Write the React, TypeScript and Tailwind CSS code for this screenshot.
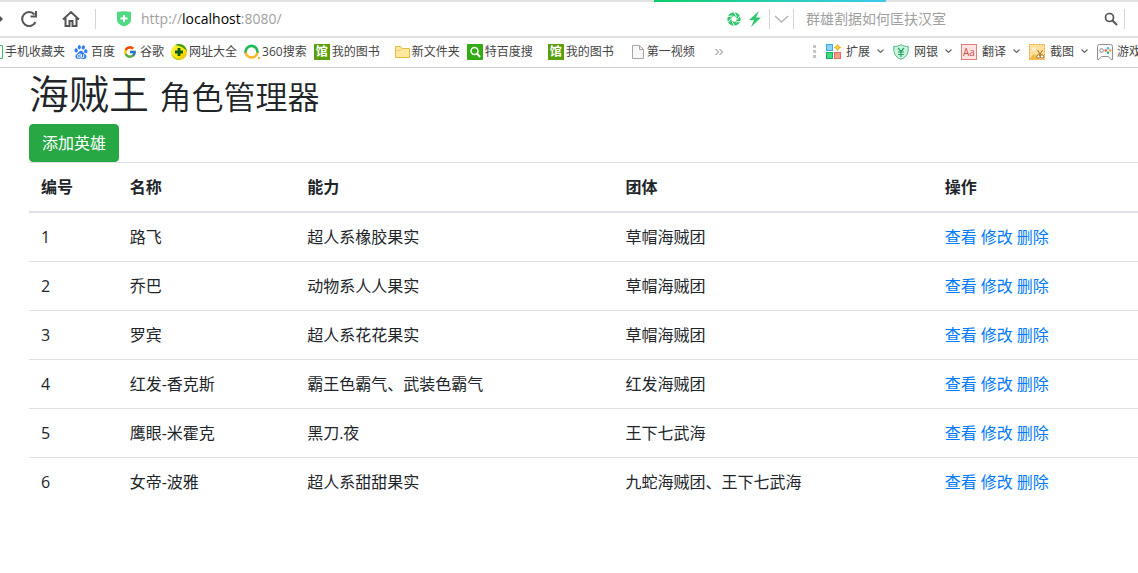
import React from 'react';
import { SiBaidu } from 'react-icons/si';
import { FcGoogle } from 'react-icons/fc';

interface Hero {
  id: number;
  name: string;
  power: string;
  team: string;
}

const heroes: Hero[] = [
  { id: 1, name: '路飞', power: '超人系橡胶果实', team: '草帽海贼团' },
  { id: 2, name: '乔巴', power: '动物系人人果实', team: '草帽海贼团' },
  { id: 3, name: '罗宾', power: '超人系花花果实', team: '草帽海贼团' },
  { id: 4, name: '红发-香克斯', power: '霸王色霸气、武装色霸气', team: '红发海贼团' },
  { id: 5, name: '鹰眼-米霍克', power: '黑刀.夜', team: '王下七武海' },
  { id: 6, name: '女帝-波雅', power: '超人系甜甜果实', team: '九蛇海贼团、王下七武海' },
];

const PhoneIcon = () => (
  <svg width="3" height="16" viewBox="0 0 3 16">
    <path d="M0 1.5h2.5v13H0" fill="none" stroke="#3fbf73" />
  </svg>
);

const SiteNavIcon = () => (
  <svg width="16" height="16" viewBox="0 0 16 16">
    <defs>
      <linearGradient id="nav" x1="0" y1="0" x2="1" y2="1">
        <stop offset="0" stopColor="#fff45a" />
        <stop offset="0.6" stopColor="#ffe600" />
        <stop offset="1" stopColor="#e8a800" />
      </linearGradient>
    </defs>
    <circle cx="8" cy="8" r="8" fill="url(#nav)" />
    <path d="M4 1.100A8 8 0 0 1 16 8C14 4 9 2 4 1.100z" fill="#3fa01c" />
    <path d="M0 9A8 8 0 0 0 10 15.700C5 15 2 13 0 9z" fill="#8cc411" />
    <path d="M8 4v8M4 8h8" stroke="#0b5d1e" strokeWidth="2.800" />
  </svg>
);

const SearchRingIcon = () => (
  <svg width="17" height="16" viewBox="0 0 17 16" fill="none" strokeWidth="2.6">
    <path d="M1.6 9A6 6 0 1 1 13.4 9" stroke="#1fb955" />
    <path d="M1.6 8.600A6 6 0 0 0 13.4 8.600" stroke="#fbb924" />
    <circle cx="15" cy="14" r="1.200" fill="#fbb924" />
  </svg>
);

const LibraryIcon = () => (
  <span className="flex size-4 items-center justify-center bg-[#5c9f0c] text-xs leading-4 font-bold text-white">
    馆
  </span>
);

const FolderIcon = () => (
  <svg width="15" height="14" viewBox="0 0 15 14">
    <path d="M.5 12.500V1.500h5l1.500 2h7.500v9z" fill="#ffe9a0" stroke="#e9b93c" />
    <path d="M.5 5.500h5l1.500-2" fill="none" stroke="#f3cf6c" />
  </svg>
);

const GreenSearchIcon = () => (
  <svg width="16" height="16" viewBox="0 0 16 16">
    <rect width="16" height="16" rx="1" fill="#32ab14" />
    <circle cx="7.500" cy="7" r="3.500" fill="none" stroke="#fff" strokeWidth="1.500" />
    <path d="M10 9.500l3 3.500" stroke="#fff" strokeWidth="2" />
  </svg>
);

const FileIcon = () => (
  <svg width="12" height="14" viewBox="0 0 12 14">
    <path d="M.5.500h7l4 4v9H.500z" fill="#f7f7f7" stroke="#a6a6a6" />
    <path d="M7.500.500v4h4" fill="none" stroke="#a6a6a6" />
  </svg>
);

const ExtensionIcon = () => (
  <svg width="16" height="16" viewBox="0 0 16 16">
    <rect x="1.500" y=".5" width="6" height="6" fill="#8fd3fb" stroke="#3ba7ee" />
    <rect x="1.500" y="8.500" width="6" height="6" fill="#3ddc84" stroke="#12ad55" />
    <rect x="9.500" y="8.500" width="6" height="6" fill="#ff9c8f" stroke="#f26b5b" />
    <path d="M12.500.500l1 2 2 1-2 1-1 2-1-2-2-1 2-1z" fill="#ffd53d" stroke="#e8a200" />
  </svg>
);

const BankIcon = () => (
  <svg width="16" height="16" viewBox="0 0 16 16">
    <path d="M8 .700C6 2 3 2.500.800 2.500c-.5 6 1 10.500 7.200 12.800 6.200-2.300 7.700-6.800 7.200-12.800C13 2.500 10 2 8 .700z" fill="#c9f5dc" stroke="#4cb582" />
    <path d="M5 4l3 3.500L11 4M8 7.500V13M5 8h6M5 10.500h6" fill="none" stroke="#2f9f68" strokeWidth="1.200" />
  </svg>
);

const TranslateIcon = () => (
  <span className="flex size-4 items-center justify-center border border-[#d9817c] bg-[#fde3e1] text-[10px] leading-none text-[#cf4f49]">
    Aa
  </span>
);

const CaptureIcon = () => (
  <svg width="16" height="16" viewBox="0 0 16 16">
    <rect x=".5" y=".5" width="15" height="15" fill="#ffdf9c" stroke="#eda02f" strokeDasharray="2 1" />
    <circle cx="5" cy="5" r="2" fill="#fff3d2" />
    <path d="M0 15l5-5 4 3v3H0z" fill="#f5b64d" />
    <path d="M8.500 6l3 5M13.500 6l-3 5" stroke="#a76a10" />
    <circle cx="9.500" cy="12.500" r="1.700" fill="#fff" stroke="#a76a10" />
    <circle cx="13" cy="12.500" r="1.700" fill="#fff" stroke="#a76a10" />
  </svg>
);

const GameIcon = () => (
  <svg width="16" height="16" viewBox="0 0 16 16">
    <path d="M2.500.500h11q2 0 2 2v13h-1.500l-2.500-3h-7l-2.500 3H.500v-13q0-2 2-2z" fill="#fafafa" stroke="#8f8f8f" />
    <circle cx="4.500" cy="6.500" r="1.800" fill="none" stroke="#888" />
    <circle cx="11" cy="4.300" r="1.200" fill="#35b7f1" />
    <circle cx="11" cy="8.700" r="1.200" fill="#25b864" />
    <circle cx="8.800" cy="6.500" r="1.200" fill="#f2564a" />
    <circle cx="13.200" cy="6.500" r="1.200" fill="#f5a623" />
  </svg>
);

const ChevronIcon = () => (
  <svg width="7" height="5" viewBox="0 0 7 5">
    <path d="M.5.500l3 3 3-3" fill="none" stroke="#666" strokeWidth="1.200" />
  </svg>
);

interface BookmarkProps {
  icon: React.ReactNode;
  label: string;
  className?: string;
}

const Bookmark: React.FC<BookmarkProps> = ({ icon, label, className = '' }) => (
  <a href="#" className={`flex shrink-0 items-center whitespace-nowrap ${className}`}>
    {icon}
    <span>{label}</span>
  </a>
);

const Tool: React.FC<BookmarkProps> = ({ icon, label }) => (
  <button className="flex shrink-0 items-center whitespace-nowrap">
    {icon}
    <span className="mr-[7px] ml-[5px]">{label}</span>
    <ChevronIcon />
  </button>
);

const AddressBar = () => (
  <div className="flex h-[34px] items-center">
    <button aria-label="前进" className="w-5">
      <svg width="4" height="12" viewBox="0 0 4 12">
        <path d="M0 3l3 3-3 3z" fill="#555" />
      </svg>
    </button>
    <button aria-label="刷新">
      <svg width="18" height="18" viewBox="0 0 18 18" fill="none" stroke="#555" strokeWidth="2">
        <path d="M15.500 12A7 7 0 1 1 14.500 4.500" />
        <path d="M16 1v5.500h-5.500" />
      </svg>
    </button>
    <button aria-label="主页" className="ml-6">
      <svg width="18" height="18" viewBox="0 0 18 18" fill="none" stroke="#555" strokeWidth="2">
        <path d="M1 9.500L9 2l8 7.500M3.500 8v8h4v-5h3v5h4V8" />
      </svg>
    </button>
    <span className="ml-[15px] h-5 w-px bg-[#d5d5d5]" />
    <svg className="ml-[21px]" width="14" height="16" viewBox="0 0 14 16">
      <path d="M0 1q7-1.500 14 0v8q0 4-7 6.500Q0 13 0 9z" fill="#4cdb80" />
      <path d="M7 4v7M3.500 7.500h7" stroke="#fff" strokeWidth="2" />
    </svg>
    <a href="#" className="ml-[10px] text-sm text-[#a0a0a0]">
      http://<span className="text-black">localhost</span>:8080/
    </a>
    <div className="ml-auto flex items-center">
      <svg width="14" height="14" viewBox="0 0 14 14">
        <circle cx="7" cy="7" r="4.700" fill="none" stroke="#2fc76d" strokeWidth="4" />
        <path d="M7 0l2.500 4.500M13 3.500l-3 4M13.500 9.500l-5 .5M7.500 14L5 9.500M1 10.500l3-4M.500 4.500l5-.5" stroke="#fff" />
      </svg>
      <svg className="ml-2" width="12" height="16" viewBox="0 0 12 16">
        <path d="M10 0L0 9h5L2 16 12 6.500H7z" fill="#2fc76d" />
      </svg>
      <span className="ml-2 h-5 w-px bg-[#d5d5d5]" />
      <button aria-label="展开" className="px-1">
        <svg width="15" height="8" viewBox="0 0 15 8">
          <path d="M1 1l6.500 6L14 1" fill="none" stroke="#b5b5b5" strokeWidth="1.500" />
        </svg>
      </button>
      <span className="h-5 w-px bg-[#d5d5d5]" />
      <input
        aria-label="搜索"
        placeholder="群雄割据如何匡扶汉室"
        className="ml-3 w-[298px] pb-px text-sm outline-none placeholder:text-[#a0a0a0]"
      />
      <button aria-label="搜索按钮">
        <svg width="14" height="14" viewBox="0 0 14 14" fill="none" stroke="#555">
          <circle cx="5.500" cy="5.500" r="4" strokeWidth="1.700" />
          <path d="M8.500 8.500l4.500 4.500" strokeWidth="2" />
        </svg>
      </button>
      <span className="mr-[13px] ml-[6px] h-5 w-px bg-[#d5d5d5]" />
    </div>
  </div>
);

const BookmarksBar = () => (
  <div className="flex h-[30px] items-center border-b border-[#d0d0d0] pb-[2px] text-xs text-[#444]">
    <Bookmark icon={<PhoneIcon />} label="手机收藏夹" className="gap-[2px]" />
    <Bookmark icon={<SiBaidu size={14} color="#2f7bf5" />} label="百度" className="ml-[9px] gap-[3px]" />
    <Bookmark icon={<FcGoogle size={14} />} label="谷歌" className="ml-2 gap-[3px]" />
    <Bookmark icon={<SiteNavIcon />} label="网址大全" className="ml-[7px] gap-[2px]" />
    <Bookmark icon={<SearchRingIcon />} label="360搜索" className="ml-[7px] gap-px" />
    <Bookmark icon={<LibraryIcon />} label="我的图书" className="ml-[7px] gap-[2px]" />
    <Bookmark icon={<FolderIcon />} label="新文件夹" className="ml-[15px] gap-[2px]" />
    <Bookmark icon={<GreenSearchIcon />} label="特百度搜" className="ml-[7px] gap-[2px]" />
    <Bookmark icon={<LibraryIcon />} label="我的图书" className="ml-[15px] gap-[2px]" />
    <Bookmark icon={<FileIcon />} label="第一视频" className="ml-[18px] gap-[3px]" />
    <button aria-label="更多书签" className="ml-5">
      <svg width="8" height="8" viewBox="0 0 8 8">
        <path d="M.5 1l3 3-3 3M4.500 1l3 3-3 3" fill="none" stroke="#777" />
      </svg>
    </button>
    <div className="-mr-[3px] ml-auto flex shrink-0 items-center gap-[9px]">
      <svg width="3" height="13" viewBox="0 0 3 13" fill="#c4c4c4">
        <path d="M0 0h3v3H0zM0 5h3v3H0zM0 10h3v3H0z" />
      </svg>
      <Tool icon={<ExtensionIcon />} label="扩展" />
      <Tool icon={<BankIcon />} label="网银" />
      <Tool icon={<TranslateIcon />} label="翻译" />
      <Tool icon={<CaptureIcon />} label="截图" />
      <Bookmark icon={<GameIcon />} label="游戏" className="gap-1" />
    </div>
  </div>
);

const HeroTable = () => (
  <table className="w-full table-fixed border-separate border-spacing-0 text-left leading-6">
    <thead>
      <tr className="*:border-t *:border-b-2 *:border-[#dee2e6] *:p-3">
        <th className="w-[8%]">编号</th>
        <th className="w-[16%]">名称</th>
        <th className="w-[28.7%]">能力</th>
        <th className="w-[28.8%]">团体</th>
        <th>操作</th>
      </tr>
    </thead>
    <tbody>
      {heroes.map((hero) => (
        <tr key={hero.id} className="*:border-b *:border-[#dee2e6] *:p-3 last:*:border-b-0">
          <td>{hero.id}</td>
          <td>{hero.name}</td>
          <td>{hero.power}</td>
          <td>{hero.team}</td>
          <td>
            <div className="flex gap-1 text-[#007bff]">
              <a href="#">查看</a>
              <a href="#">修改</a>
              <a href="#">删除</a>
            </div>
          </td>
        </tr>
      ))}
    </tbody>
  </table>
);

export default function App() {
  return (
    <div className="min-h-screen overflow-hidden bg-white font-['Open_Sans','Noto_Sans_CJK_SC',sans-serif] text-[#212529]">
      <header>
        <div className="flex h-[2px] bg-[#e2e2e2]">
          <div className="ml-[57.5%] w-[20.4%] bg-linear-to-r from-[#08cf62] to-[#3fc8ee]" />
        </div>
        <AddressBar />
        <div className="h-[2px] bg-[#e0e0e0]" />
        <BookmarksBar />
      </header>
      <main className="pl-[29px]">
        <h1 className="pt-[2px] pb-[6px] text-[40px] leading-[48px] font-[350]">
          海贼王 <small className="text-[32px] leading-none">角色管理器</small>
        </h1>
        <button className="block rounded border border-[#28a745] bg-[#28a745] px-3 py-[6px] leading-6 text-white">
          添加英雄
        </button>
        <HeroTable />
      </main>
    </div>
  );
}
